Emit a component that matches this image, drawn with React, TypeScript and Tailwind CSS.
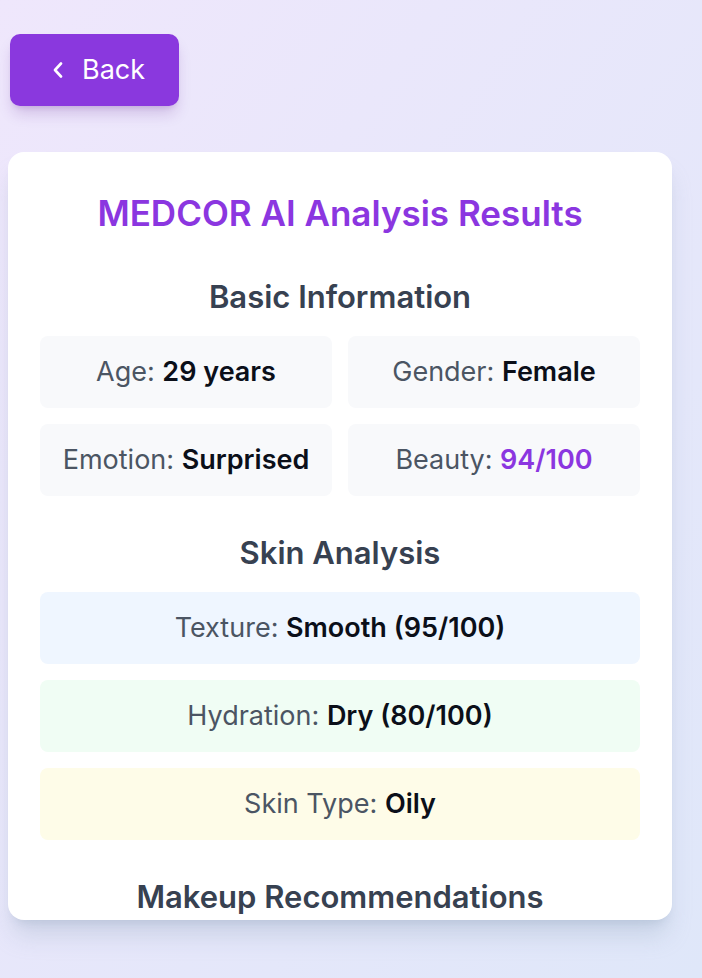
import React from "react";

type Item = {
	label: string;
	value: string;
	accent?: boolean;
};

const basicInfo: Item[] = [
	{ label: "Age", value: "29 years" },
	{ label: "Gender", value: "Female" },
	{ label: "Emotion", value: "Surprised" },
	{ label: "Beauty", value: "94/100", accent: true },
];

const skinInfo = [
	{ label: "Texture", value: "Smooth (95/100)", bg: "bg-[#eff6ff]" },
	{ label: "Hydration", value: "Dry (80/100)", bg: "bg-[#f0fdf4]" },
	{ label: "Skin Type", value: "Oily", bg: "bg-[#fefce8]" },
];

function Stat({ label, value, accent }: Item) {
	return (
		<div className="text-[27px] leading-[34px] text-[#4b5563]">
			{label}:{" "}
			<span className={`font-semibold ${accent ? "text-[#8b36e0]" : "text-[#0b0f19]"}`}>
				{value}
			</span>
		</div>
	);
}

function SectionTitle({ children }: { children: React.ReactNode }) {
	return (
		<h2 className="mt-[37px] mb-[19px] text-center text-[31px] leading-[40px] font-semibold text-[#374151]">
			{children}
		</h2>
	);
}

export default function App() {
	return (
		<div
			className="min-h-[978px] w-full bg-gradient-to-br from-[#efe7fc] to-[#dfe7f9] px-2 pt-[34px]"
			style={{ fontFamily: "Inter, 'Noto Sans', sans-serif" }}
		>
			<button className="ml-[2px] flex h-[72px] w-[169px] items-center gap-[18px] rounded-[10px] bg-[#8a38de] pl-[42px] text-[27px] text-white shadow-lg shadow-purple-900/20">
				<svg width="12" height="16" viewBox="0 0 12 16" fill="none">
					<path d="M9 1.5 L3 8 L9 14.5" stroke="white" strokeWidth="2.6" strokeLinecap="round" strokeLinejoin="round" />
				</svg>
				<span>Back</span>
			</button>

			<div className="mt-[46px] flex h-[768px] w-[664px] flex-col overflow-hidden rounded-[16px] bg-white px-8 pt-[39px] shadow-xl shadow-slate-400/30">
				<h1 className="mb-[5px] text-center text-[35px] leading-[44px] font-semibold text-[#8b36e0]">
					MEDCOR AI Analysis Results
				</h1>

				<SectionTitle>Basic Information</SectionTitle>
				<div className="grid shrink-0 grid-cols-2 gap-4">
					{basicInfo.map((item) => (
						<div key={item.label} className="flex h-[72px] items-center justify-center rounded-lg bg-[#f8f9fb]">
							<Stat {...item} />
						</div>
					))}
				</div>

				<SectionTitle>Skin Analysis</SectionTitle>
				<div className="flex shrink-0 flex-col gap-4">
					{skinInfo.map((item) => (
						<div key={item.label} className={`flex h-[72px] items-center justify-center rounded-lg ${item.bg}`}>
							<Stat label={item.label} value={item.value} />
						</div>
					))}
				</div>

				<SectionTitle>Makeup Recommendations</SectionTitle>
			</div>
		</div>
	);
}
